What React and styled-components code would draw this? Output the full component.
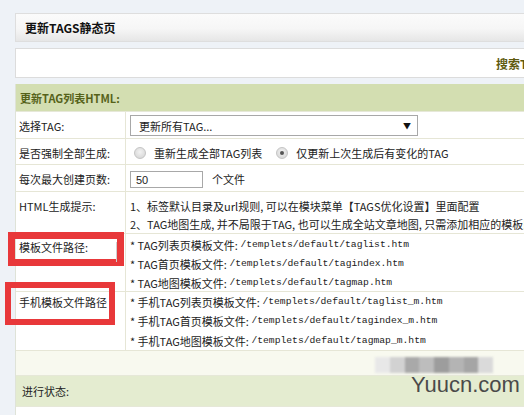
import React from "react";
import styled, { createGlobalStyle } from "styled-components";

const Global = createGlobalStyle`
  html, body { margin: 0; padding: 0; background: #eef2f7; overflow: hidden; }
  body { font-family: "Noto Sans CJK SC", "Liberation Sans", sans-serif; font-size: 11px; color: #222; }
`;

const Page = styled.div`
  position: relative;
  width: 524px;
  height: 415px;
  overflow: hidden;
  padding: 13px 0 0 15px;
  box-sizing: border-box;
`;

const Panel = styled.div`
  width: 580px;
  display: flex;
  flex-direction: column;
  gap: 6px;
`;

const TitleBar = styled.div`
  height: 27px;
  border: 1px solid #dedede;
  background: linear-gradient(#fbfbfb, #f6f6f6 55%, #e6e6e6);
  display: flex;
  align-items: center;
  padding-left: 9px;
  font-weight: bold;
  font-size: 12px;
  color: #111;
`;

const SearchBar = styled.div`
  height: 28px;
  border: 1px solid #dcdcdc;
  background: #fff;
  display: flex;
  align-items: center;
  padding-left: 480px;
  font-size: 12px;
  color: #5e5a10;
  font-weight: bold;
`;

const Table = styled.div`
  display: flex;
  flex-direction: column;
  border-left: 1px solid #dfe3d8;
  background: #fff;
  height: 400px;
`;

const Band = styled.div`
  height: ${(p) => p.$h}px;
  flex: none;
  box-sizing: border-box;
  display: flex;
  align-items: center;
  padding-left: ${(p) => p.$pl}px;
  background: ${(p) => p.$bg};
  border-bottom: 1px solid #e6e8d8;
  font-weight: ${(p) => (p.$bold ? "bold" : "normal")};
  color: ${(p) => p.$color || "#222"};
  font-size: 11px;
`;

const Row = styled.div`
  display: grid;
  grid-template-columns: 110px 1fr;
  height: ${(p) => p.$h}px;
  flex: none;
  box-sizing: border-box;
  border-bottom: 1px solid #e6e6d6;
  align-items: ${(p) => (p.$top ? "start" : "center")};
`;

const Label = styled.div`
  align-self: stretch;
  border-right: 1px solid #e6e6d6;
  padding: ${(p) => p.$pt || 0}px 0 0 3px;
  display: flex;
  align-items: ${(p) => (p.$top ? "flex-start" : "center")};
  line-height: 18px;
  white-space: nowrap;
  overflow: hidden;
`;

const Content = styled.div`
  padding: ${(p) => p.$pt || 0}px 0 0 4px;
  display: flex;
  flex-direction: ${(p) => (p.$col ? "column" : "row")};
  align-items: ${(p) => (p.$col ? "flex-start" : "center")};
  white-space: nowrap;
`;

const Line = styled.div`
  height: ${(p) => p.$h}px;
  display: flex;
  align-items: center;
  white-space: pre;
`;

const Select = styled.div`
  width: 272px;
  height: 19px;
  border: 1px solid #a8a8a8;
  background: #fff;
  display: flex;
  align-items: center;
  justify-content: space-between;
  padding: 0 6px 0 8px;
  box-sizing: content-box;
  font-size: 11px;
`;

const Arrow = styled.span`
  font-size: 8px;
  color: #111;
`;

const Radio = styled.span`
  width: 10px;
  height: 10px;
  border-radius: 50%;
  border: 1px solid #c4c4c4;
  background: radial-gradient(circle at 50% 40%, #f2f2f2, #d2d2d2);
  display: inline-flex;
  align-items: center;
  justify-content: center;
  margin: 0 8px 0 ${(p) => p.$ml}px;
  &::after {
    content: "";
    width: 4px;
    height: 4px;
    border-radius: 50%;
    background: ${(p) => (p.$checked ? "#555" : "transparent")};
  }
`;

const Input = styled.div`
  width: 66px;
  height: 15px;
  border: 1px solid #a8a8a8;
  padding-left: 5px;
  display: flex;
  align-items: center;
  font-family: "Liberation Sans", sans-serif;
  font-size: 11px;
  margin-right: 9px;
  margin-top: 1px;
`;

const Path = styled.span`
  font-family: "Liberation Mono", monospace;
  font-size: 9.7px;
  line-height: 1;
`;

const RedBox = styled.div`
  position: absolute;
  left: ${(p) => p.$x}px;
  top: ${(p) => p.$y}px;
  width: ${(p) => p.$w}px;
  height: ${(p) => p.$h}px;
  box-sizing: border-box;
  border: ${(p) => p.$b}px solid #e8383a;
  pointer-events: none;
`;

const Divider = styled.span`
  position: absolute;
  left: 101px;
  top: 3px;
  width: 1px;
  height: 20px;
  background: #cfcfcf;
`;

const Blur = styled.div`
  position: absolute;
  left: 375px;
  top: 357px;
  width: 118px;
  height: 16px;
  display: flex;
  filter: blur(1.2px);
`;

const BlurCell = styled.div`
  flex: 1;
  background: ${(p) => p.$c};
`;

const Watermark = styled.div`
  position: absolute;
  left: 411px;
  top: 372px;
  font-family: "Liberation Sans", Arial, sans-serif;
  font-size: 22px;
  color: #4a4a4a;
`;

export default function App() {
  return (
    <Page>
      <Global />
      <Panel>
        <TitleBar>更新TAGS静态页</TitleBar>
        <SearchBar>搜索TAG：</SearchBar>
        <Table>
          <Band $h={28} $pl={4} $bg="#d3deb1" $bold $color="#56621a">更新TAG列表HTML:</Band>
          <Row $h={27}>
            <Label $pt={1}>选择TAG:</Label>
            <Content $pt={1}>
              <Select>
                <span>更新所有TAG...</span>
                <Arrow>▼</Arrow>
              </Select>
            </Content>
          </Row>
          <Row $h={26}>
            <Label $pt={2}>是否强制全部生成:</Label>
            <Content $pt={2}>
              <Radio $ml={4} />
              <span>重新生成全部TAG列表</span>
              <Radio $ml={14} $checked />
              <span>仅更新上次生成后有变化的TAG</span>
            </Content>
          </Row>
          <Row $h={27}>
            <Label $pt={2}>每次最大创建页数:</Label>
            <Content $pt={2}>
              <Input>50</Input>
              <span>个文件</span>
            </Content>
          </Row>
          <Row $h={42} $top>
            <Label $top $pt={5}>HTML生成提示:</Label>
            <Content $col $pt={5}>
              <Line $h={18}>1、标签默认目录及url规则, 可以在模块菜单【TAGS优化设置】里面配置</Line>
              <Line $h={18}>2、TAG地图生成, 并不局限于TAG, 也可以生成全站文章地图, 只需添加相应的模板即可</Line>
            </Content>
          </Row>
          <Row $h={58} $top>
            <Label $top $pt={4}>模板文件路径:</Label>
            <Content $col $pt={1}>
              <Line $h={19}>* TAG列表页模板文件: <Path>/templets/default/taglist.htm</Path></Line>
              <Line $h={19}>* TAG首页模板文件: <Path>/templets/default/tagindex.htm</Path></Line>
              <Line $h={19}>* TAG地图模板文件: <Path>/templets/default/tagmap.htm</Path></Line>
            </Content>
          </Row>
          <Row $h={59} $top>
            <Label $top $pt={1}>手机模板文件路径</Label>
            <Content $col $pt={0}>
              <Line $h={19.5}>* 手机TAG列表页模板文件: <Path>/templets/default/taglist_m.htm</Path></Line>
              <Line $h={19.5}>* 手机TAG首页模板文件: <Path>/templets/default/tagindex_m.htm</Path></Line>
              <Line $h={19.5}>* 手机TAG地图模板文件: <Path>/templets/default/tagmap_m.htm</Path></Line>
            </Content>
          </Row>
          <Band $h={25} $pl={4} $bg="#f8f9ef" />
          <Band $h={31} $pl={6} $bg="#e4ecd0">进行状态:</Band>
        </Table>
      </Panel>
      <RedBox $x={8} $y={232} $w={116} $h={34} $b={7}>
        <Divider />
      </RedBox>
      <RedBox $x={5} $y={282} $w={110} $h={43} $b={6} />
      <Blur>
        <BlurCell $c="#e8e8e8" />
        <BlurCell $c="#d2d2d2" />
        <BlurCell $c="#a9a9a9" />
        <BlurCell $c="#bdbdbd" />
        <BlurCell $c="#9d9d9d" />
        <BlurCell $c="#b4b4b4" />
        <BlurCell $c="#a5a5a5" />
        <BlurCell $c="#dadada" />
      </Blur>
      <Watermark>Yuucn.com</Watermark>
    </Page>
  );
}
